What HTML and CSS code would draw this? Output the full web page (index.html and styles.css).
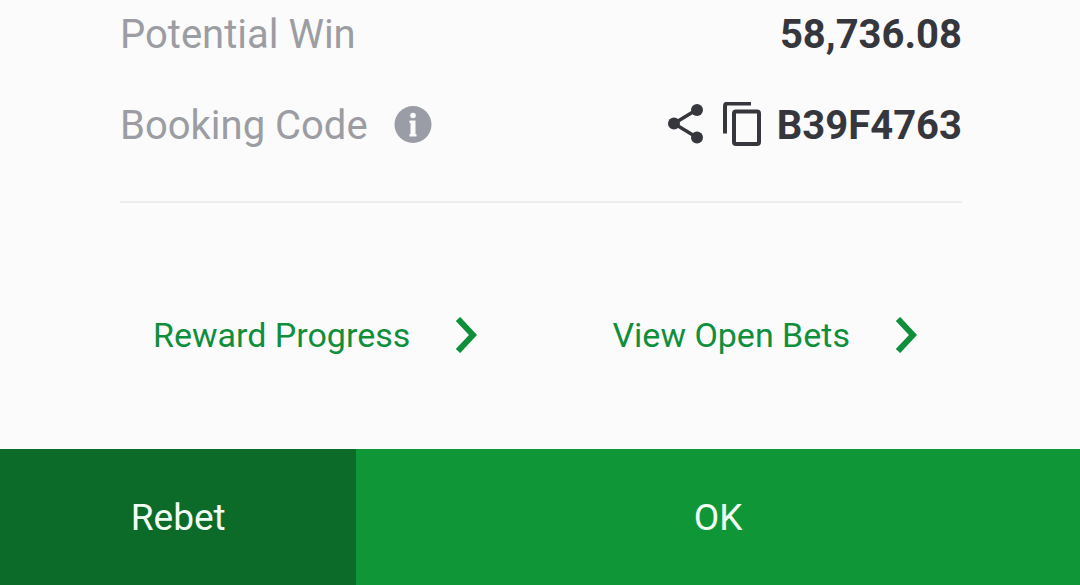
FILE: index.html
```html
<!DOCTYPE html>
<html lang="en">
<head>
    <meta charset="UTF-8">
    <meta name="viewport" content="width=device-width, initial-scale=1.0">
    <title>Bet Confirmation</title>
    <link rel="stylesheet" href="styles.css">
</head>
<body>
    <main class="content">
        <dl class="details">
            <div class="row">
                <dt>Potential Win</dt>
                <dd>58,736.08</dd>
            </div>
            <div class="row">
                <dt>
                    Booking Code
                    <button type="button" class="icon-button" aria-label="About booking code">
                        <svg width="38" height="38" viewBox="0 0 38 38">
                            <circle cx="19" cy="18.5" r="18.5" fill="#9a9da6"/>
                            <circle cx="19" cy="9.5" r="2.8" fill="#fbfbfb"/>
                            <path d="M15.5 14.5h6v13.5h1v2.5h-7v-2.500h1v-11h-1z" fill="#fbfbfb"/>
                        </svg>
                    </button>
                </dt>
                <dd>
                    <button type="button" class="icon-button share" aria-label="Share booking code">
                        <svg width="36" height="42" viewBox="0 0 36 42" fill="#36373d">
                            <path d="M30 5.5L7 19.5l23 14" fill="none" stroke="#36373d" stroke-width="3.5"/>
                            <circle cx="30" cy="6" r="6"/>
                            <circle cx="7" cy="19.500" r="6"/>
                            <circle cx="30" cy="33.500" r="6"/>
                        </svg>
                    </button>
                    <button type="button" class="icon-button" aria-label="Copy booking code">
                        <svg width="38" height="46" viewBox="0 0 38 46" fill="none" stroke="#36373d" stroke-width="4">
                            <path d="M2 31.500V4q0-2.500 2.500-2.500H28"/>
                            <rect x="11" y="9.500" width="25" height="32.500" rx="2"/>
                        </svg>
                    </button>
                    B39F4763
                </dd>
            </div>
        </dl>
        <nav class="links">
            <a href="#">
                Reward Progress
                <svg width="22" height="36" viewBox="0 0 22 36"><path d="M3 2l15 16L3 34" fill="none" stroke="#0f8f3c" stroke-width="6"/></svg>
            </a>
            <a href="#">
                View Open Bets
                <svg width="22" height="36" viewBox="0 0 22 36"><path d="M3 2l15 16L3 34" fill="none" stroke="#0f8f3c" stroke-width="6"/></svg>
            </a>
        </nav>
    </main>
    <footer class="actions">
        <button type="button" class="rebet">Rebet</button>
        <button type="button" class="ok">OK</button>
    </footer>
</body>
</html>
```
FILE: styles.css
```css
* {
    box-sizing: border-box;
    margin: 0;
    padding: 0;
}

body {
    display: flex;
    flex-direction: column;
    min-height: 100vh;
    font-family: Roboto, sans-serif;
    background-color: #fbfbfb;
}

button {
    border: none;
    font-family: inherit;
    cursor: pointer;
}

svg {
    display: block;
}

.content {
    flex: 1;
    padding: 0 118px 0 120px;
}

/* Bet details */
.details {
    padding: 10px 0 52px;
    border-bottom: 2px solid #ededee;
}

.row {
    display: flex;
    justify-content: space-between;
    align-items: center;
    height: 48px;
}

.row + .row {
    margin-top: 43px;
}

.row dt,
.row dd {
    display: flex;
    align-items: center;
    font-size: 40px;
}

.row dt {
    gap: 26px;
    color: #9b9da3;
}

.row dd {
    gap: 16px;
    font-weight: 700;
    color: #36373d;
}

.icon-button {
    background: none;
}

.share {
    margin-right: 4px;
}

/* Links below the divider */
.links {
    display: flex;
    justify-content: space-between;
    padding: 112px 45px 73px 33px;
}

.links a {
    display: flex;
    align-items: center;
    gap: 45px;
    font-size: 34px;
    color: #0f8f3c;
    text-decoration: none;
}

/* Bottom buttons */
.actions {
    display: flex;
    height: 136px;
}

.actions button {
    font-size: 37px;
    color: #f2fff4;
}

.rebet {
    width: 33%;
    background-color: #0c6b29;
}

.actions .ok {
    flex: 1;
    background-color: #0f9737;
}
```
